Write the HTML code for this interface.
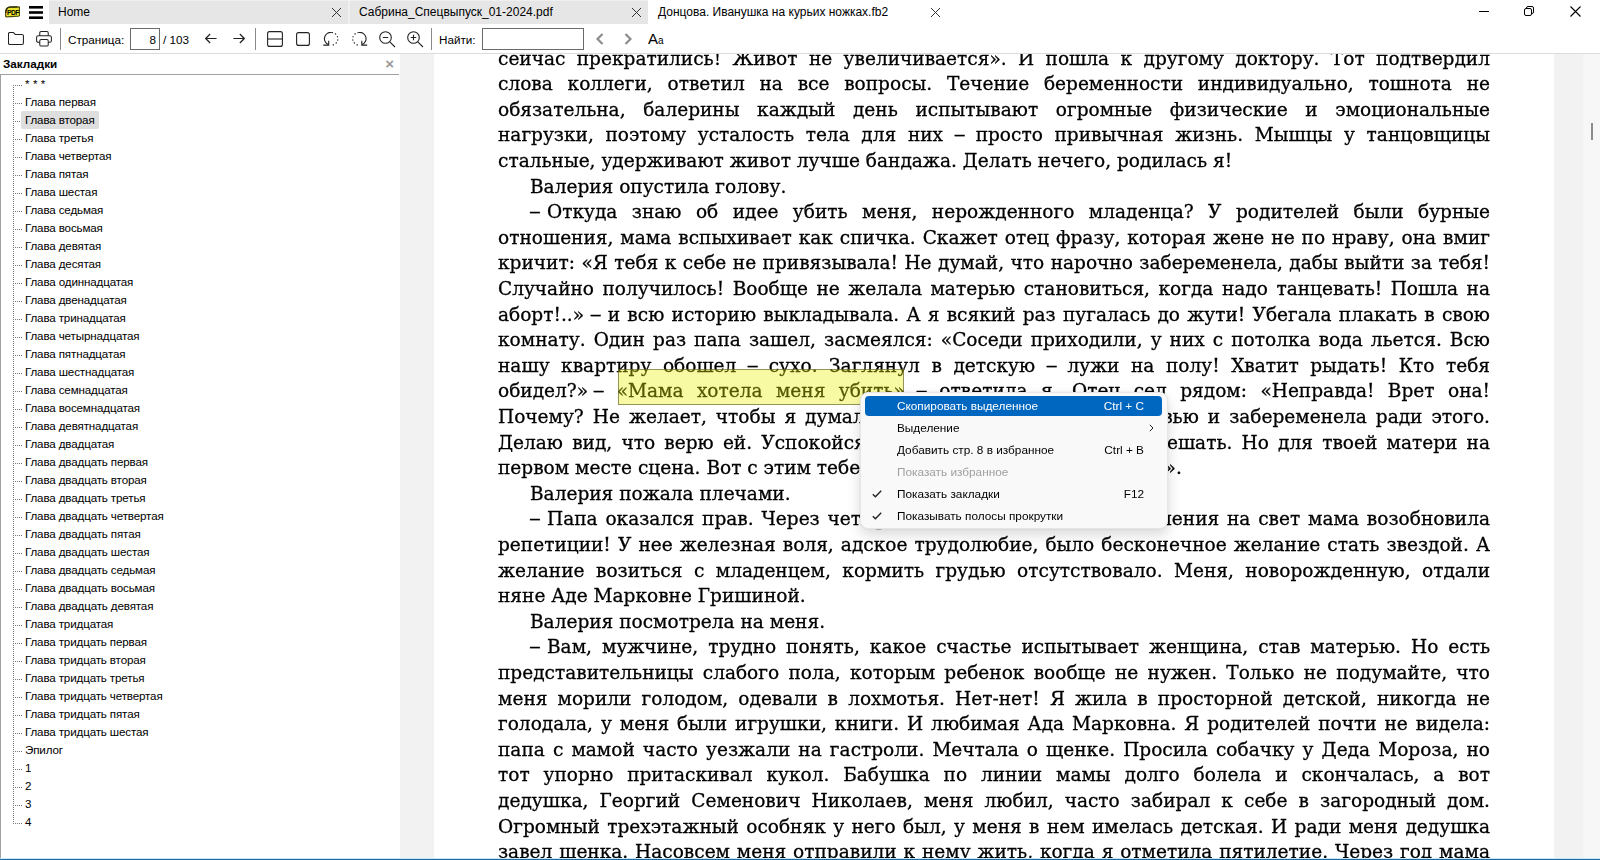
<!DOCTYPE html>
<html lang="ru"><head><meta charset="utf-8"><title>Донцова. Иванушка на курьих ножках.fb2 - SumatraPDF</title>
<style>
*{box-sizing:border-box;margin:0;padding:0}
html,body{width:1600px;height:860px;overflow:hidden;background:#fff}
body{position:relative;font-family:"Liberation Sans","DejaVu Sans",sans-serif;font-size:12px;color:#000}
#tabs{position:absolute;left:0;top:0;width:1600px;height:24px;background:#fff}
#tabbg{position:absolute;left:49px;top:0;width:599px;height:24px;background:#f0f0f0}
.tab{position:absolute;top:1px;height:23px;background:#e6e6e6;font-size:12px;line-height:23px;padding-left:9px;white-space:nowrap;overflow:hidden}
.tab.act{background:#fff}
.tab svg{position:absolute;right:6px;top:6px}
#toolbar{position:absolute;left:0;top:24px;width:1600px;height:30px;background:#fff;border-bottom:1px solid #dcdcdc}
#toolbar .t{position:absolute;top:9px;font-size:11.7px;line-height:14px;white-space:nowrap}
#toolbar .sep{position:absolute;top:4px;width:1px;height:22px;background:#8a8a8a}
#toolbar svg{position:absolute}
.inp{position:absolute;background:#fff;border:1px solid #6a6a6a}
#side{position:absolute;left:0;top:54px;width:399px;height:804px;background:#fff}
#sidehead{position:absolute;left:0;top:0;width:399px;height:21px;border-bottom:1px solid #a0a0a0;font-size:11.7px;line-height:21px;padding-left:3px}
#sidehead b{position:relative;top:-1px}
#sideclose{position:absolute;right:5px;top:0;color:#9a9a9a;font-size:15px;font-weight:bold;line-height:19px}
#tree{position:absolute;left:0;top:21px;width:399px;height:783px;border-left:1px solid #a0a0a0}
#vline{position:absolute;left:12px;top:10px;width:1px;height:739px;background:repeating-linear-gradient(to bottom,#777 0,#777 1px,transparent 1px,transparent 2px)}
.row{position:absolute;left:-1px;height:18px;line-height:18px;font-size:11.6px;letter-spacing:-.14px;white-space:nowrap}
.row i{position:absolute;left:14px;top:10px;width:8px;height:1px;background:repeating-linear-gradient(to right,transparent 0,transparent 1px,#777 1px,#777 2px)}
.row span{position:absolute;left:21px;top:0;height:18px;padding:0 4px;border-radius:2px}
.row.sel span{background:#dedede}
#canvas{position:absolute;left:400px;top:54px;width:1200px;height:804px;background:#f2f2f2;overflow:hidden}
#page{position:absolute;left:34px;top:0;width:1120px;height:804px;background:#fff;overflow:hidden;font-family:"DejaVu Serif","Liberation Serif",serif;font-size:18.55px;color:#000}
.ln{position:absolute;left:64px;width:992px;height:28px;line-height:28px;white-space:nowrap;text-align:left}
.ln.j{text-align:justify;text-align-last:justify;white-space:nowrap}
.ln.ind{left:96px;width:960px}
.nb{display:inline-block;white-space:nowrap;text-align:left;text-align-last:left}
.dash{display:inline-block;width:17px}
.ln b{display:inline-block;font-weight:normal;transform:scaleX(1.28);transform-origin:50% 50%}
.dash b{transform-origin:0 50%;position:relative;left:-1px}
#txt{position:absolute;left:0;top:0;width:1121px;height:804px;will-change:transform;-webkit-text-stroke:.3px #000}
#hl{position:absolute;left:184px;top:315px;width:286px;height:36px;background:rgba(235,240,0,.36);border:1px solid rgba(85,85,40,.62)}
#vscroll{position:absolute;right:0;top:0;width:17px;height:804px;background:#f7f7f7}
#thumb{position:absolute;left:8px;top:69px;width:2px;height:17px;background:#8c8c8c}
#menu{position:absolute;left:860px;top:392px;width:308px;height:137px;background:#f9f9f9;border:1px solid #e6e6e6;border-radius:8px;box-shadow:0 6px 14px rgba(0,0,0,.15),0 0 3px rgba(0,0,0,.08)}
.mi{position:absolute;left:4px;width:297px;height:20px;line-height:20px;font-size:11.8px;border-radius:4px;white-space:nowrap}
.mi .l{position:absolute;left:32px}
.mi .r{position:absolute;right:18px}
.mi.hi{background:#0067c0;color:#fff}
.mi.dis{color:#a0a0a0}
.mi svg{position:absolute}
#bottomline{position:absolute;left:0;top:858px;width:1600px;height:2px;background:linear-gradient(to bottom,#c4ebf5 0,#c4ebf5 0.8px,#1d70aa 0.8px,#1a66a0 2px)}

</style></head><body>
<div id="tabs">
<div id="tabbg"></div>
<svg style="position:absolute;left:5px;top:6px" width="15" height="12" viewBox="0 0 15 12"><path d="M4.2 1.2 L13.6 0.8 Q14.5 0.8 14.5 1.8 V9.2 Q14.5 10 13.6 10.1 L1.6 10.9 Q0.6 10.9 0.6 10 V6 Q0.8 2 4.2 1.2Z" fill="#e9e52f" stroke="#4f4c12" stroke-width="1.2"/><path d="M0.8 7 Q0.8 2 4.4 1.1 L12 0.8" fill="none" stroke="#2e2c08" stroke-width="1.3"/><text x="8" y="8.8" font-family="Liberation Sans, sans-serif" font-weight="bold" font-size="6.6" letter-spacing="-0.4" text-anchor="middle" fill="#000">PDF</text></svg>
<svg style="position:absolute;left:29px;top:6px" width="14" height="13" viewBox="0 0 14 13"><rect x="0" y="0" width="14" height="2.6" fill="#000"/><rect x="0" y="5.2" width="14" height="2.6" fill="#000"/><rect x="0" y="10.4" width="14" height="2.6" fill="#000"/></svg>
<div class="tab" style="left:49px;width:299px">Home<svg width="11" height="11" viewBox="0 0 11 11"><path d="M1 1L10 10M10 1L1 10" stroke="#333" stroke-width="1"/></svg></div>
<div class="tab" style="left:350px;width:298px">Сабрина_Спецвыпуск_01-2024.pdf<svg width="11" height="11" viewBox="0 0 11 11"><path d="M1 1L10 10M10 1L1 10" stroke="#333" stroke-width="1"/></svg></div>
<div class="tab act" style="left:649px;width:298px">Донцова. Иванушка на курьих ножках.fb2<svg width="11" height="11" viewBox="0 0 11 11"><path d="M1 1L10 10M10 1L1 10" stroke="#333" stroke-width="1"/></svg></div>
<svg style="position:absolute;left:1479px;top:6px" width="11" height="11" viewBox="0 0 11 11"><path d="M0 5.5H10" stroke="#000" stroke-width="1"/></svg>
<svg style="position:absolute;left:1524px;top:6px" width="11" height="11" viewBox="0 0 11 11"><rect x="0.5" y="2.5" width="7" height="7" rx="1.5" fill="none" stroke="#000"/><path d="M2.5 2.5V2Q2.5 0.5 4 0.5H8Q9.5 0.5 9.5 2V6Q9.5 7.5 8 7.5H7.5" fill="none" stroke="#000"/></svg>
<svg style="position:absolute;left:1570px;top:6px" width="11" height="11" viewBox="0 0 11 11"><path d="M0.5 0.5L10.5 10.5M10.5 0.5L0.5 10.5" stroke="#000" stroke-width="1.1"/></svg>
</div>
<div id="toolbar">
<svg style="left:8px;top:8px" width="16.4" height="13.5" viewBox="0 0 17 14"><path d="M0.5 2Q0.5 0.5 2 0.5H5.5L7.5 2.5H14.5Q16 2.5 16 4V11.5Q16 13 14.5 13H2Q0.5 13 0.5 11.5Z" fill="none" stroke="#222" stroke-width="1.1"/></svg>
<svg style="left:36px;top:7px" width="16" height="16" viewBox="0 0 17 17"><path d="M4 5V2Q4 0.6 5.4 0.6H11.6Q13 0.6 13 2V5" fill="none" stroke="#222" stroke-width="1.1"/><path d="M4 12H2.5Q0.6 12 0.6 10V7Q0.6 5 2.5 5H14.5Q16.4 5 16.4 7V10Q16.4 12 14.5 12H13" fill="none" stroke="#222" stroke-width="1.1"/><rect x="4" y="9" width="9" height="7" rx="1.5" fill="none" stroke="#222" stroke-width="1.1"/></svg>
<div class="sep" style="left:60px"></div>
<div class="t" style="left:68px">Страница:</div>
<div class="inp" style="left:130px;top:4px;width:30px;height:22px"></div>
<div class="t" style="left:130px;width:26px;text-align:right">8</div>
<div class="t" style="left:163px">/ 103</div>
<svg style="left:205px;top:9px" width="12" height="11" viewBox="0 0 14 12"><path d="M13.5 6H1M6 0.8L0.8 6L6 11.2" fill="none" stroke="#222" stroke-width="1.4"/></svg>
<svg style="left:233px;top:9px" width="12" height="11" viewBox="0 0 14 12"><path d="M0.5 6H13M8 0.8L13.2 6L8 11.2" fill="none" stroke="#222" stroke-width="1.4"/></svg>
<div class="sep" style="left:255px"></div>
<svg style="left:267px;top:7px" width="16" height="16" viewBox="0 0 16 16"><rect x="0.6" y="0.6" width="14.8" height="14.8" rx="2" fill="none" stroke="#222" stroke-width="1.1"/><path d="M0.6 8H15.4" stroke="#222" stroke-width="1.1"/></svg>
<svg style="left:296px;top:8px" width="14" height="14" viewBox="0 0 14 14"><rect x="0.6" y="0.6" width="12.8" height="12.8" rx="2" fill="none" stroke="#222" stroke-width="1.1"/></svg>
<svg style="left:323px;top:8px" width="17" height="15" viewBox="0 0 17 15"><path d="M8.8 0.5A6.3 6.3 0 0 0 5.5 12.6" fill="none" stroke="#222" stroke-width="1.1"/><path d="M8.8 0.5A6.3 6.3 0 0 1 8.2 13.1" fill="none" stroke="#222" stroke-width="1.1" stroke-dasharray="1.3 2"/><path d="M0.3 13.1H5.7V8.7" fill="none" stroke="#222" stroke-width="1.1"/></svg>
<svg style="left:351px;top:8px" width="17" height="15" viewBox="0 0 17 15"><path d="M7.7 0.5A6.3 6.3 0 0 1 11 12.6" fill="none" stroke="#222" stroke-width="1.1"/><path d="M7.7 0.5A6.3 6.3 0 0 0 8.3 13.1" fill="none" stroke="#222" stroke-width="1.1" stroke-dasharray="1.3 2"/><path d="M16.2 13.1H10.8V8.7" fill="none" stroke="#222" stroke-width="1.1"/></svg>
<svg style="left:379px;top:7px" width="17" height="17" viewBox="0 0 17 17"><circle cx="6.5" cy="6.5" r="5.8" fill="none" stroke="#222" stroke-width="1.1"/><path d="M10.8 10.8L16 16M3.8 6.5H9.2" stroke="#222" stroke-width="1.1"/></svg>
<svg style="left:407px;top:7px" width="17" height="17" viewBox="0 0 17 17"><circle cx="6.5" cy="6.5" r="5.8" fill="none" stroke="#222" stroke-width="1.1"/><path d="M10.8 10.8L16 16M3.8 6.5H9.2M6.5 3.8V9.2" stroke="#222" stroke-width="1.1"/></svg>
<div class="sep" style="left:431px"></div>
<div class="t" style="left:439px">Найти:</div>
<div class="inp" style="left:482px;top:4px;width:102px;height:22px"></div>
<svg style="left:596px;top:9px" width="8" height="12" viewBox="0 0 8 12"><path d="M6.5 1L1.5 6L6.5 11" fill="none" stroke="#8c8c8c" stroke-width="2.2"/></svg>
<svg style="left:624px;top:9px" width="8" height="12" viewBox="0 0 8 12"><path d="M1.5 1L6.5 6L1.5 11" fill="none" stroke="#8c8c8c" stroke-width="2.2"/></svg>
<div class="t" style="left:648px;top:6px;font-size:15px;line-height:17px">A<span style="font-size:10px">a</span></div>
</div>
<div id="side">
<div id="sidehead"><b>Закладки</b><span id="sideclose">×</span></div>
<div id="tree">
<div id="vline"></div>
<div class="row" style="top:0px"><i></i><span style="letter-spacing:3.4px">***</span></div>
<div class="row" style="top:18px"><i></i><span>Глава первая</span></div>
<div class="row sel" style="top:36px"><i></i><span>Глава вторая</span></div>
<div class="row" style="top:54px"><i></i><span>Глава третья</span></div>
<div class="row" style="top:72px"><i></i><span>Глава четвертая</span></div>
<div class="row" style="top:90px"><i></i><span>Глава пятая</span></div>
<div class="row" style="top:108px"><i></i><span>Глава шестая</span></div>
<div class="row" style="top:126px"><i></i><span>Глава седьмая</span></div>
<div class="row" style="top:144px"><i></i><span>Глава восьмая</span></div>
<div class="row" style="top:162px"><i></i><span>Глава девятая</span></div>
<div class="row" style="top:180px"><i></i><span>Глава десятая</span></div>
<div class="row" style="top:198px"><i></i><span>Глава одиннадцатая</span></div>
<div class="row" style="top:216px"><i></i><span>Глава двенадцатая</span></div>
<div class="row" style="top:234px"><i></i><span>Глава тринадцатая</span></div>
<div class="row" style="top:252px"><i></i><span>Глава четырнадцатая</span></div>
<div class="row" style="top:270px"><i></i><span>Глава пятнадцатая</span></div>
<div class="row" style="top:288px"><i></i><span>Глава шестнадцатая</span></div>
<div class="row" style="top:306px"><i></i><span>Глава семнадцатая</span></div>
<div class="row" style="top:324px"><i></i><span>Глава восемнадцатая</span></div>
<div class="row" style="top:342px"><i></i><span>Глава девятнадцатая</span></div>
<div class="row" style="top:360px"><i></i><span>Глава двадцатая</span></div>
<div class="row" style="top:378px"><i></i><span>Глава двадцать первая</span></div>
<div class="row" style="top:396px"><i></i><span>Глава двадцать вторая</span></div>
<div class="row" style="top:414px"><i></i><span>Глава двадцать третья</span></div>
<div class="row" style="top:432px"><i></i><span>Глава двадцать четвертая</span></div>
<div class="row" style="top:450px"><i></i><span>Глава двадцать пятая</span></div>
<div class="row" style="top:468px"><i></i><span>Глава двадцать шестая</span></div>
<div class="row" style="top:486px"><i></i><span>Глава двадцать седьмая</span></div>
<div class="row" style="top:504px"><i></i><span>Глава двадцать восьмая</span></div>
<div class="row" style="top:522px"><i></i><span>Глава двадцать девятая</span></div>
<div class="row" style="top:540px"><i></i><span>Глава тридцатая</span></div>
<div class="row" style="top:558px"><i></i><span>Глава тридцать первая</span></div>
<div class="row" style="top:576px"><i></i><span>Глава тридцать вторая</span></div>
<div class="row" style="top:594px"><i></i><span>Глава тридцать третья</span></div>
<div class="row" style="top:612px"><i></i><span>Глава тридцать четвертая</span></div>
<div class="row" style="top:630px"><i></i><span>Глава тридцать пятая</span></div>
<div class="row" style="top:648px"><i></i><span>Глава тридцать шестая</span></div>
<div class="row" style="top:666px"><i></i><span>Эпилог</span></div>
<div class="row" style="top:684px"><i></i><span>1</span></div>
<div class="row" style="top:702px"><i></i><span>2</span></div>
<div class="row" style="top:720px"><i></i><span>3</span></div>
<div class="row" style="top:738px"><i></i><span>4</span></div>
</div>
</div>
<div id="canvas">
<div id="page">
<div id="txt">
<div class="ln j" style="top:-9.5px">сейчас прекратились! Живот не увеличивается». И пошла к другому доктору. Тот подтвердил</div>
<div class="ln j" style="top:16.1px">слова коллеги, ответил на все вопросы. Течение беременности индивидуально, тошнота не</div>
<div class="ln j" style="top:41.7px">обязательна, балерины каждый день испытывают огромные физические и эмоциональные</div>
<div class="ln j" style="top:67.3px">нагрузки, поэтому усталость тела для них <b>–</b> просто привычная жизнь. Мышцы у танцовщицы</div>
<div class="ln" style="top:92.9px">стальные, удерживают живот лучше бандажа. Делать нечего, родилась я!</div>
<div class="ln ind" style="top:118.5px">Валерия опустила голову.</div>
<div class="ln j ind" style="top:144.1px"><span class="dash"><b>–</b></span>Откуда знаю об идее убить меня, нерожденного младенца? У родителей были бурные</div>
<div class="ln j" style="top:169.7px">отношения, мама вспыхивает как спичка. Скажет отец фразу, которая жене не по нраву, она вмиг</div>
<div class="ln j" style="top:195.3px">кричит: «Я тебя к себе не привязывала! Не думай, что нарочно забеременела, дабы выйти за тебя!</div>
<div class="ln j" style="top:220.9px">Случайно получилось! Вообще не желала матерью становиться, когда надо танцевать! Пошла на</div>
<div class="ln j" style="top:246.5px">аборт!..» <b>–</b> и всю историю выкладывала. А я всякий раз пугалась до жути! Убегала плакать в свою</div>
<div class="ln j" style="top:272.1px">комнату. Один раз папа зашел, засмеялся: «Соседи приходили, у них с потолка вода льется. Всю</div>
<div class="ln j" style="top:297.7px">нашу квартиру обошел <b>–</b> сухо. Заглянул в детскую <b>–</b> лужи на полу! Хватит рыдать! Кто тебя</div>
<div class="ln j" style="top:323.3px"><span class="nb">обидел?» <b>–</b></span> «Мама хотела меня <span class="nb">убить», <b>–</b></span> ответила я. Отец сел рядом: «Неправда! Врет она!</div>
<div class="ln j" style="top:348.9px">Почему? Не желает, чтобы я думал, что она полна ко мне любовью и забеременела ради этого.</div>
<div class="ln j" style="top:374.5px">Делаю вид, что верю ей. Успокойся<span style="letter-spacing:.45px">, дочка, не нужно никому м</span>ешать. Но для твоей матери на</div>
<div class="ln" style="top:400.1px">первом месте сцена. Вот с этим тебе <span style="letter-spacing:.2px">придется как-то жить дальше</span>».</div>
<div class="ln ind" style="top:425.7px">Валерия пожала плечами.</div>
<div class="ln j ind" style="top:451.3px"><span class="dash"><b>–</b></span>Папа оказался прав. Через четыре месяца после моего появления на свет мама возобновила</div>
<div class="ln j" style="top:476.9px">репетиции! У нее железная воля, адское трудолюбие, было бесконечное желание стать звездой. А</div>
<div class="ln j" style="top:502.5px">желание возиться с младенцем, кормить грудью отсутствовало. Меня, новорожденную, отдали</div>
<div class="ln" style="top:528.1px">няне Аде Марковне Гришиной.</div>
<div class="ln ind" style="top:553.7px">Валерия посмотрела на меня.</div>
<div class="ln j ind" style="top:579.3px"><span class="dash"><b>–</b></span>Вам, мужчине, трудно понять, какое счастье испытывает женщина, став матерью. Но есть</div>
<div class="ln j" style="top:604.9px">представительницы слабого пола, которым ребенок вообще не нужен. Только не подумайте, что</div>
<div class="ln j" style="top:630.5px">меня морили голодом, одевали в лохмотья. Нет-нет! Я жила в просторной детской, никогда не</div>
<div class="ln j" style="top:656.1px">голодала, у меня были игрушки, книги. И любимая Ада Марковна. Я родителей почти не видела:</div>
<div class="ln j" style="top:681.7px">папа с мамой часто уезжали на гастроли. Мечтала о щенке. Просила собачку у Деда Мороза, но</div>
<div class="ln j" style="top:707.3px">тот упорно притаскивал кукол. Бабушка по линии мамы долго болела и скончалась, а вот</div>
<div class="ln j" style="top:732.9px">дедушка, Георгий Семенович Николаев, меня любил, часто забирал к себе в загородный дом.</div>
<div class="ln j" style="top:758.5px">Огромный трехэтажный особняк у него был, у меня в нем имелась детская. И ради меня дедушка</div>
<div class="ln j" style="top:784.1px">завел щенка. Насовсем меня отправили к нему жить, когда я отметила пятилетие. Через год мама</div>
</div>
<div id="hl"></div>
</div>
<div id="vscroll"><div id="thumb"></div></div>
</div>
<div id="menu">
<div class="mi hi" style="top:3px"><span class="l">Скопировать выделенное</span><span class="r">Ctrl + C</span></div>
<div class="mi" style="top:25px"><span class="l">Выделение</span><svg style="right:8px;top:6px" width="5" height="8" viewBox="0 0 5 8"><path d="M0.8 0.8L4 4L0.8 7.2" fill="none" stroke="#222" stroke-width="1"/></svg></div>
<div class="mi" style="top:47px"><span class="l">Добавить стр. 8 в избранное</span><span class="r">Ctrl + B</span></div>
<div class="mi dis" style="top:69px"><span class="l">Показать избранное</span></div>
<div class="mi" style="top:91px"><svg style="left:7px;top:6px" width="10" height="8" viewBox="0 0 10 8"><path d="M0.8 4.2L3.4 6.8L9.2 0.8" fill="none" stroke="#222" stroke-width="1.4"/></svg><span class="l">Показать закладки</span><span class="r">F12</span></div>
<div class="mi" style="top:113px"><svg style="left:7px;top:6px" width="10" height="8" viewBox="0 0 10 8"><path d="M0.8 4.2L3.4 6.8L9.2 0.8" fill="none" stroke="#222" stroke-width="1.4"/></svg><span class="l">Показывать полосы прокрутки</span></div>
</div>
<div id="bottomline"></div>
</body></html>
